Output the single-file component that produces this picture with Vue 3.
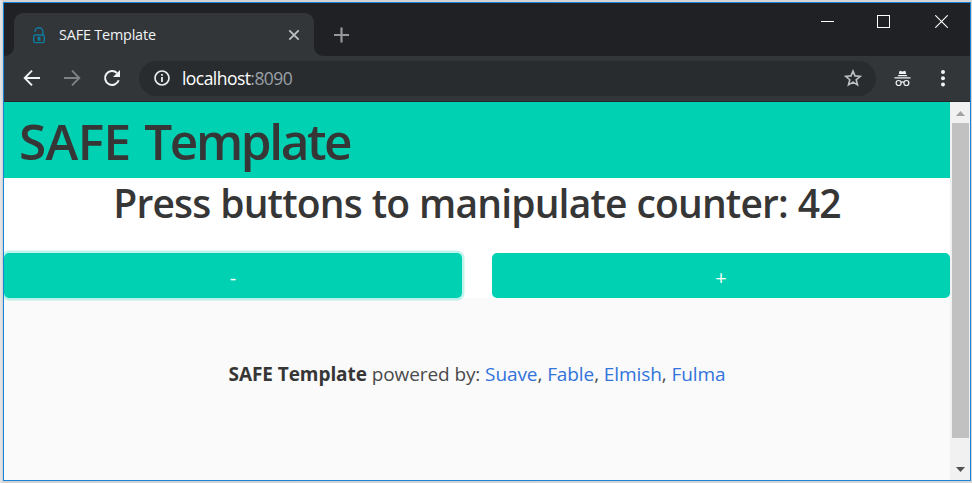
<script setup>
import { ref } from 'vue'

const counter = ref(42)
const links = ['Suave', 'Fable', 'Elmish', 'Fulma']
</script>

<template>
  <div class="desktop">
    <div class="window">
      <header class="tabstrip">
        <div class="tab">
          <svg class="tab-shape" width="320" height="43" viewBox="0 0 320 43">
            <path d="M0 43C6 43 10 39 10 33V10C10 4 14 0 20 0H300C306 0 310 4 310 10V33C310 39 314 43 320 43Z" fill="#323639" />
          </svg>
          <svg class="lock" width="14" height="18" viewBox="0 0 14 18" fill="none" stroke="#0f7b9f" stroke-width="1.4">
            <path d="M3 5V4.600A3.900 3.900 0 0 1 10.800 4.600V8" />
            <rect x="1.700" y="8" width="10.600" height="7.600" rx="1.600" />
            <path d="M6.300 10.500h1.400v2.500h-1.400z" />
          </svg>
          <span class="tab-title">SAFE Template</span>
          <svg class="tab-close" width="12" height="12" viewBox="0 0 12 12" stroke="#bdc1c6" stroke-width="1.8">
            <path d="M1.3 1.3 10.7 10.7M10.7 1.3 1.3 10.7" />
          </svg>
        </div>
        <svg class="new-tab" width="16" height="16" viewBox="0 0 16 16" stroke="#94979b" stroke-width="2.2">
          <path d="M7.500 .5v15M0 8h15" />
        </svg>
        <div class="controls">
          <svg width="13" height="13" viewBox="0 0 13 13" stroke="#fff"><path d="M0 6.5h13" /></svg>
          <svg width="13" height="13" viewBox="0 0 13 13" fill="none" stroke="#fff"><rect x=".5" y=".5" width="12" height="12" /></svg>
          <svg class="close" width="13" height="13" viewBox="0 0 13 13" stroke="#fff" stroke-width="1.1"><path d="M.3.3 12.7 12.7M12.7.3.3 12.7" /></svg>
        </div>
      </header>

      <nav class="toolbar">
        <svg class="nav-icon" width="18" height="18" viewBox="0 0 18 18" fill="none" stroke="#f1f3f4" stroke-width="1.9">
          <path d="M17 9H2.2M9 1.6 1.7 9 9 16.4" />
        </svg>
        <svg class="nav-icon forward" width="18" height="18" viewBox="0 0 18 18" fill="none" stroke="#7f8285" stroke-width="1.9">
          <path d="M1 9h14.8M9 1.6 16.3 9 9 16.4" />
        </svg>
        <svg class="nav-icon reload" width="18" height="18" viewBox="0 0 18 18">
          <path d="M15.7 11.2A7 7 0 1 1 14 4" fill="none" stroke="#f1f3f4" stroke-width="2" />
          <path d="M17 1V8H10Z" fill="#f1f3f4" />
        </svg>
        <div class="address">
          <svg width="16" height="16" viewBox="0 0 16 16">
            <circle cx="8" cy="8" r="7" fill="none" stroke="#e8eaed" stroke-width="1.7" />
            <path d="M7.1 7h1.8v5H7.1zM7.1 4h1.8v1.8H7.1z" fill="#e8eaed" />
          </svg>
          <span class="url">localhost<span class="port">:8090</span></span>
          <svg class="star" width="18" height="18" viewBox="0 0 18 18" fill="none" stroke="#bdc1c6" stroke-width="1.6">
            <path d="M9 2.1 11 6.9 16.3 7.3 12.2 10.7 13.5 15.9 9 13.1 4.5 15.9 5.8 10.7 1.7 7.3 7 6.9Z" />
          </svg>
        </div>
        <svg class="incognito" width="17" height="17" viewBox="0 0 17 17">
          <path d="M5.600.8 8.5 1.4 11.400.8 12.2 4H4.800zM4.300 5h8.400l.7 1.300H3.600zM.5 7.300h16v1.100H.5z" fill="#f1f3f4" />
          <g fill="none" stroke="#f1f3f4" stroke-width="1.2">
            <circle cx="4.600" cy="13" r="2.500" /><circle cx="12.400" cy="13" r="2.500" /><path d="M7.1 12.4q1.4-1 2.8 0" />
          </g>
        </svg>
        <svg class="menu" width="4" height="18" viewBox="0 0 4 18" fill="#f1f3f4">
          <circle cx="2" cy="3" r="2" /><circle cx="2" cy="9.200" r="2" /><circle cx="2" cy="15.5" r="2" />
        </svg>
      </nav>

      <main class="viewport">
        <div class="page">
          <div class="navbar"><h2><span class="brand">SAFE </span>Template</h2></div>
          <div class="content">
            <h3>Press buttons to manipulate counter: {{ counter }}</h3>
            <div class="columns">
              <button class="button focused" @click="counter--"><span>-</span></button>
              <button class="button" @click="counter++"><span>+</span></button>
            </div>
          </div>
          <footer class="footer">
            <p><strong>SAFE Template</strong><span class="powered"> powered by: <template v-for="(name, i) in links" :key="name"><a>{{ name }}</a><template v-if="i < links.length - 1">, </template></template></span></p>
          </footer>
        </div>
        <div class="scrollbar">
          <svg width="20" height="21" viewBox="0 0 20 21"><path d="M6 14 10.5 9 15 14Z" fill="#a3a3a3" /></svg>
          <div class="thumb"></div>
          <svg class="down" width="20" height="21" viewBox="0 0 20 21"><path d="M6 8h9l-4.500 5Z" fill="#505050" /></svg>
        </div>
      </main>
    </div>
  </div>
</template>

<style>
body { background: #dedede; }
</style>

<style scoped>
* { box-sizing: border-box; }
svg { display: block; flex: none; }
.desktop {
  width: 972px;
  height: 483px;
  padding: 2px 1px 2px 3px;
  background: linear-gradient(90deg, #e9e9e9, #d2d2d2 3px, #d6d6d6);
  font-family: "Open Sans", "Noto Sans", sans-serif;
  overflow: hidden;
}
.window {
  width: 968px;
  height: 479px;
  display: flex;
  flex-direction: column;
  border: 1px solid #1883d7;
}
.tabstrip {
  height: 53px;
  flex: none;
  display: flex;
  align-items: flex-start;
  background: #202124;
}
.tab {
  position: relative;
  width: 320px;
  height: 43px;
  margin-top: 10px;
  padding-left: 28px;
  display: flex;
  align-items: center;
}
.tab-shape { position: absolute; left: 0; top: 0; }
.lock, .tab-title, .tab-close { position: relative; }
.lock { margin-top: 3px; }
.tab-title {
  margin-left: 13px;
  width: 218px;
  color: #f1f3f4;
  font-size: 14.4px;
  letter-spacing: -.18px;
  white-space: nowrap;
}
.tab-close { margin-left: 11px; }
.new-tab { margin: 24px 0 0 10px; }
.controls {
  display: flex;
  gap: 43px;
  margin: 12px 22px 0 auto;
}
.close { margin-left: 2px; }
.toolbar {
  height: 46px;
  flex: none;
  display: flex;
  align-items: center;
  padding: 0 25px 1px 19px;
  background: #323639;
  border-bottom: 1px solid #25282a;
}
.forward { margin-left: 22px; }
.reload { margin-left: 22px; }
.address {
  width: 737px;
  height: 35px;
  margin-left: 18px;
  padding: 0 14px 0 15px;
  display: flex;
  align-items: center;
  border-radius: 18px;
  background: #282c2f;
}
.url {
  margin-left: 12px;
  color: #fff;
  font-size: 17.5px;
  letter-spacing: -.55px;
}
.port { color: #9aa0a6; }
.star { margin-left: auto; }
.incognito { margin-left: 18px; }
.menu { margin-left: auto; }
.viewport { flex: 1; display: flex; min-height: 0; }
.page {
  width: 946px;
  display: flex;
  flex-direction: column;
  overflow: hidden;
  background: #fafafa;
}
.navbar {
  height: 76px;
  flex: none;
  padding: 4px 15px 0;
  background: #00d1b2;
}
h2, h3 { margin: 0; color: #363636; font-weight: 600; white-space: nowrap; }
h2 { font-size: 49.5px; line-height: 70px; letter-spacing: -2.4px; }
.brand { letter-spacing: -.6px; word-spacing: 1.5px; }
.content { height: 120px; flex: none; background: #fff; }
h3 {
  height: 75px;
  font-size: 39px;
  line-height: 50px;
  letter-spacing: -.83px;
  word-spacing: .5px;
  text-align: center;
}
.columns { display: grid; grid-template-columns: 1fr 1fr; gap: 30px; }
.button {
  height: 45px;
  padding: 5px 0 0;
  border: 0;
  border-radius: 5px;
  background: #00d1b2;
  color: #fff;
  font-family: inherit;
  font-size: 20px;
  line-height: 28px;
}
.focused { box-shadow: 0 0 0 2.500px rgba(0, 209, 178, .25); }
.footer { padding-top: 61px; text-align: center; }
.footer p {
  margin: 0;
  color: #4a4a4a;
  font-size: 19px;
  line-height: 30px;
  white-space: nowrap;
}
strong { color: #363636; font-weight: 700; letter-spacing: -.08px; }
.powered { letter-spacing: -.09px; }
a { color: #3273dc; }
.scrollbar {
  width: 20px;
  display: flex;
  flex-direction: column;
  background: #f1f1f1;
}
.thumb { width: 17px; height: 315px; margin-left: 2px; background: #c1c1c1; }
.down { margin-top: auto; }
</style>
